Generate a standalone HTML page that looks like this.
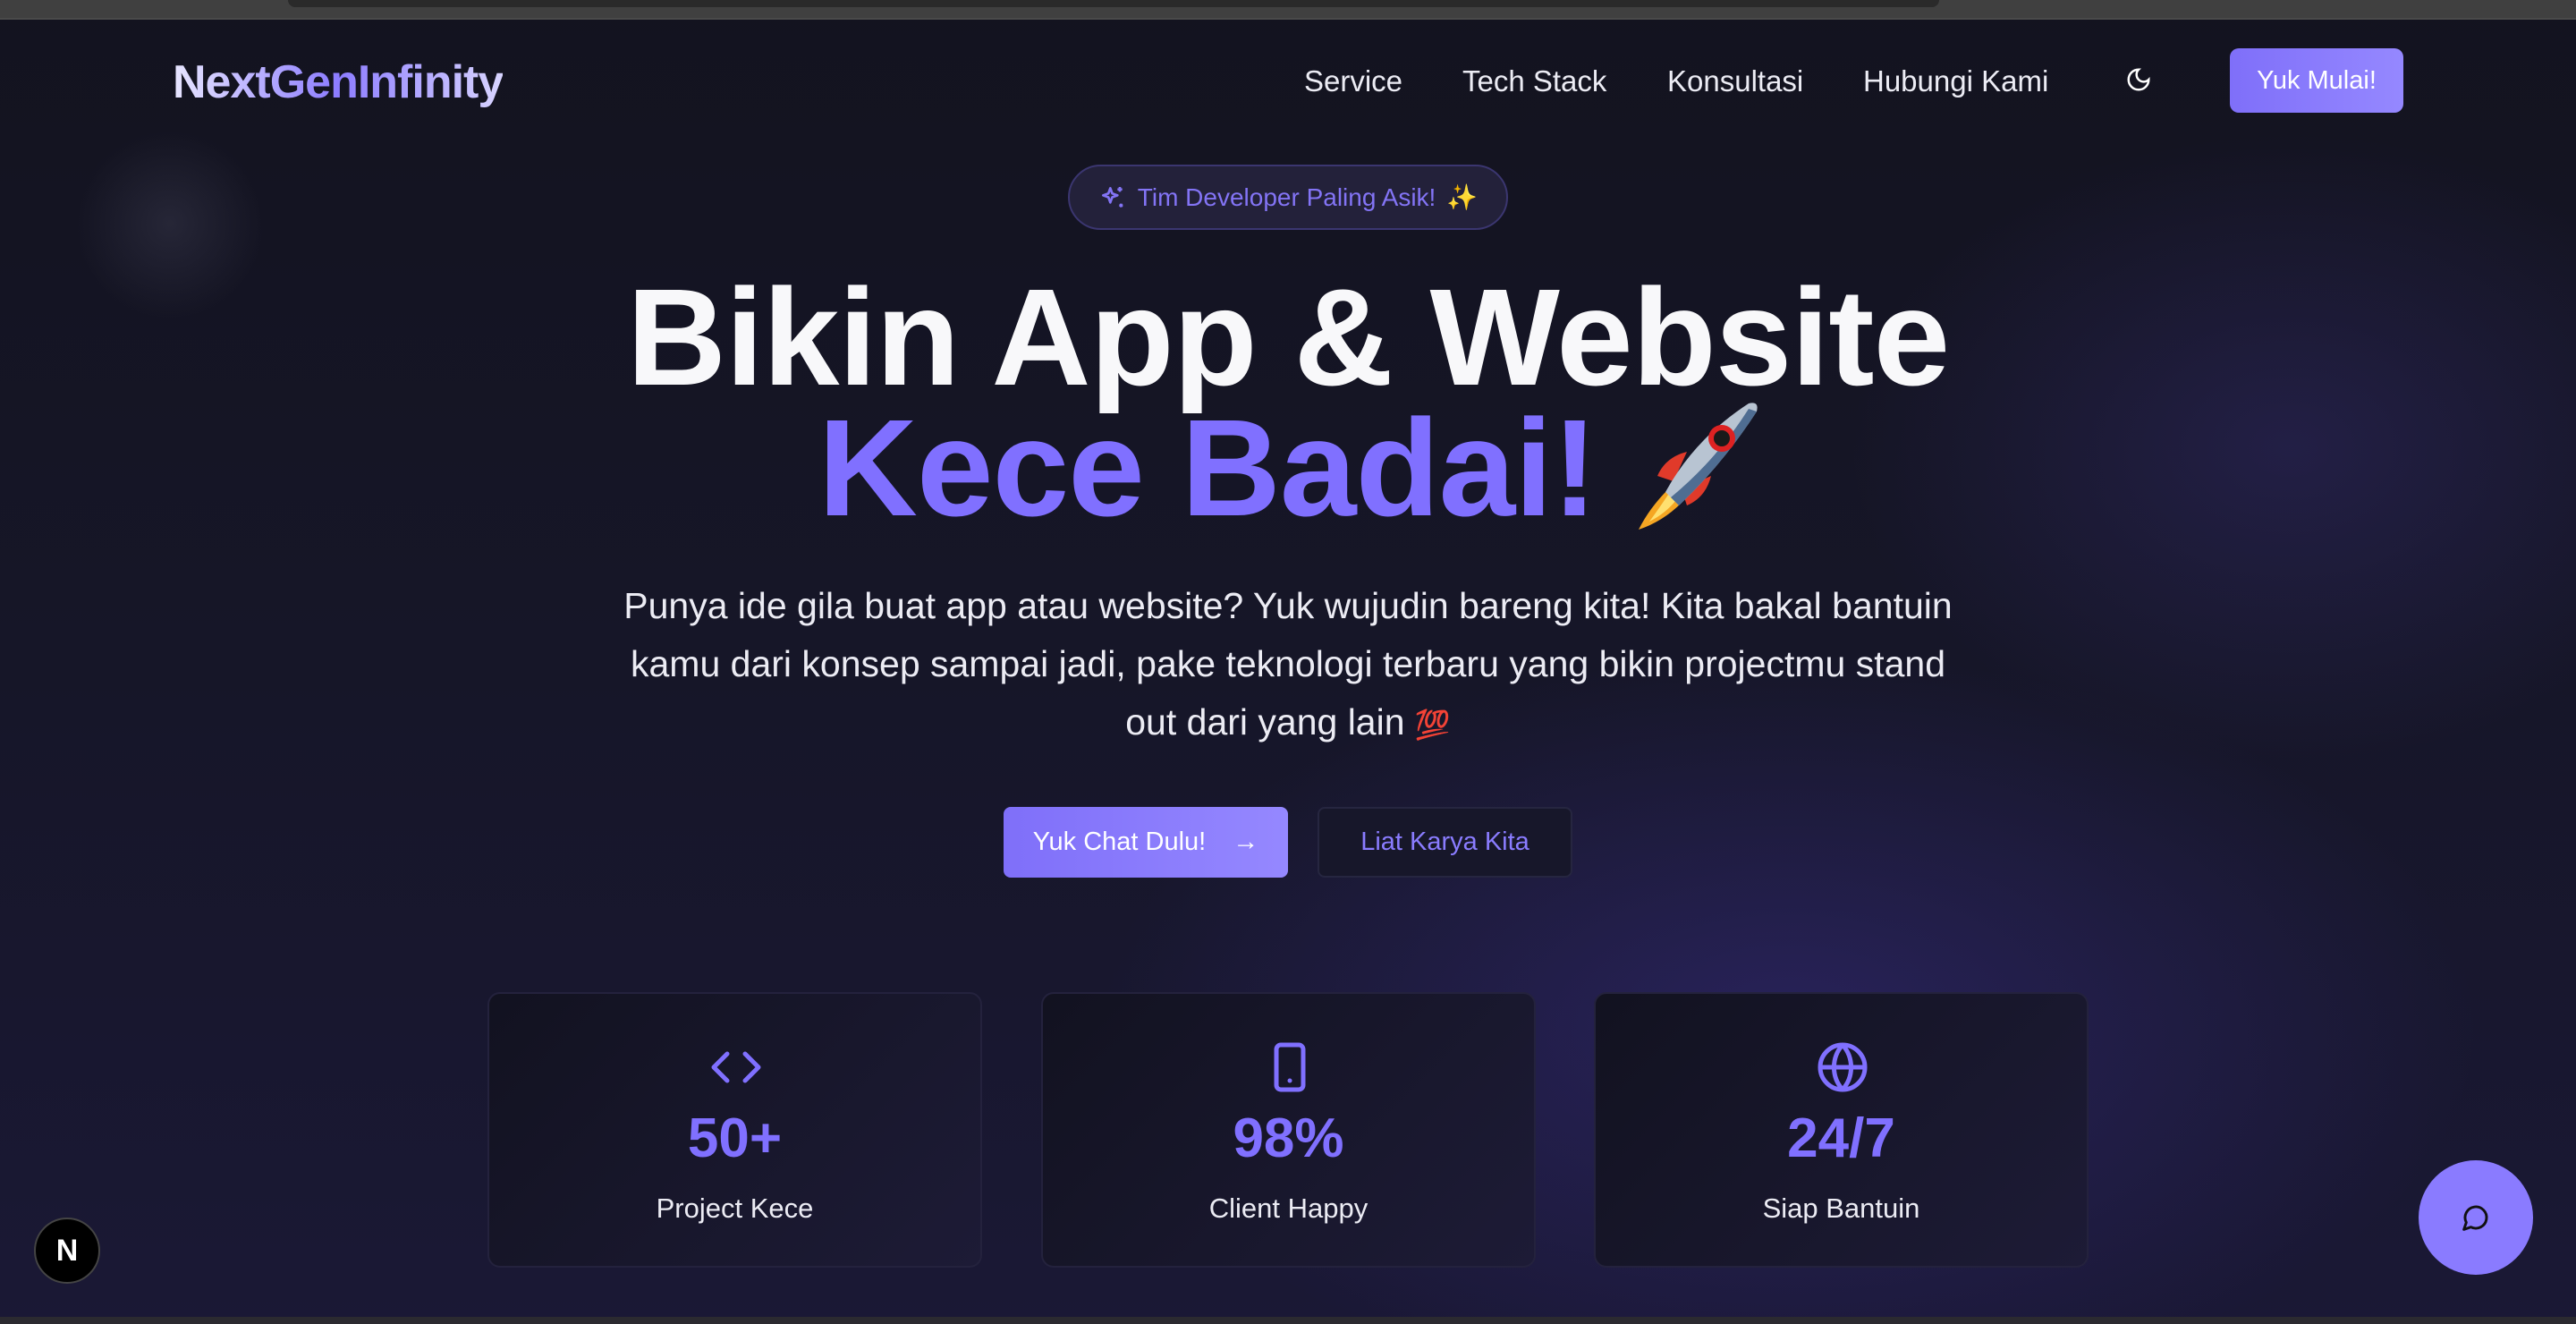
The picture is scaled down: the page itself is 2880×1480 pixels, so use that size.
<!DOCTYPE html>
<html><head><meta charset="utf-8">
<style>
*{margin:0;padding:0;box-sizing:border-box}
html,body{width:2880px;height:1480px;overflow:hidden;background:#121220;font-family:"Liberation Sans",sans-serif}
.top{position:absolute;left:0;top:0;width:2880px;height:22px;background:#404040;border-bottom:2px solid #4a4a4a;z-index:5}
.tab{position:absolute;left:322px;top:0;width:1846px;height:8px;background:#2a2a2a;border-radius:0 0 14px 14px}
.page{position:absolute;left:0;top:0;width:2880px;height:1480px;background:
radial-gradient(ellipse 700px 500px at 2560px 500px,rgba(60,50,130,.35),transparent 70%),
radial-gradient(ellipse 1100px 600px at 2000px 1150px,rgba(70,55,170,.35),transparent 70%),
radial-gradient(circle 150px at 190px 250px,rgba(60,60,80,.45),transparent 70%),
linear-gradient(180deg,#13131f 0%,#161628 50%,#1a1835 100%);}
.bottom{position:absolute;left:0;top:1472px;width:2880px;height:8px;background:#2b2a30;z-index:5}
.logo{position:absolute;left:193px;top:62px;font-size:52px;font-weight:bold;letter-spacing:-1px;background:linear-gradient(90deg,#e8e6ff 0%,#8c7cff 50%,#d8d4ff 100%);-webkit-background-clip:text;color:transparent}
.nav{position:absolute;top:72px;font-size:33px;color:#ececf4}
.btn1{position:absolute;left:2493px;top:54px;width:194px;height:72px;border-radius:10px;background:linear-gradient(90deg,#7f6ff9,#9588ff);color:#fff;font-size:29px;display:flex;align-items:center;justify-content:center}
.badge{position:absolute;left:1194px;top:184px;width:492px;height:73px;border-radius:37px;border:2px solid #3b3670;background:#23213a;color:#8374f5;font-size:28px;display:flex;align-items:center;justify-content:center;gap:12px}
.h1{position:absolute;left:0;width:2880px;text-align:center;font-weight:bold;font-size:154px;letter-spacing:-1px;line-height:1}
.p{position:absolute;left:500px;width:1880px;top:645px;text-align:center;font-size:41px;line-height:65px;color:#ececf4}
.b{position:absolute;top:902px;height:79px;border-radius:8px;display:flex;align-items:center;justify-content:center;font-size:29px}
.card{position:absolute;top:1109px;width:553px;height:308px;border-radius:14px;border:2px solid #24223d;background:linear-gradient(135deg,#121220,#1d1b36);text-align:center}
.card svg{position:absolute;left:246px;top:52px}
.num{position:absolute;top:126px;width:100%;font-size:62px;font-weight:bold;color:#8070ff}
.lab{position:absolute;top:222px;width:100%;font-size:31px;color:#ececf4}
</style></head><body>
<div class="top"><div class="tab"></div></div>
<div class="page">
<div class="logo">NextGenInfinity</div>
<div class="nav" style="left:1458px">Service</div>
<div class="nav" style="left:1635px">Tech Stack</div>
<div class="nav" style="left:1864px">Konsultasi</div>
<div class="nav" style="left:2083px">Hubungi Kami</div>
<svg style="position:absolute;left:2376px;top:74px" width="30" height="30" viewBox="0 0 24 24" fill="none" stroke="#fff" stroke-width="2" stroke-linecap="round"><path d="M12 3a6 6 0 0 0 9 9 9 9 0 1 1-9-9Z"/></svg>
<div class="btn1">Yuk Mulai!</div>
<div class="badge"><svg width="32" height="32" viewBox="0 0 24 24" fill="none" stroke="#8374f5" stroke-width="2" stroke-linejoin="round"><path d="M10 4l1.6 4.4L16 10l-4.4 1.6L10 16l-1.6-4.4L4 10l4.4-1.6Z"/><path d="M18 3v4M16 5h4M19 17v3M17.5 18.5h3"/></svg>Tim Developer Paling Asik! <span style="color:#f5d040">✨</span></div>
<div class="h1" style="top:300px;color:#f8f8fa">Bikin App &amp; Website</div>
<div class="h1" style="top:446px;color:#8070ff;padding-right:180px">Kece Badai!</div>
<svg style="position:absolute;left:1815px;top:445px" width="160" height="150" viewBox="0 0 100 100">
<path d="M22 58 Q28 44 44 40 L34 62Z" fill="#e03a2a"/><path d="M44 80 Q58 74 62 58 L40 68Z" fill="#e03a2a"/>
<path d="M30 68 Q16 82 8 98 Q26 92 40 78Z" fill="#f5a623"/><path d="M30 72 Q22 84 16 92 Q28 86 36 76Z" fill="#ffe070"/>
<path d="M28 70 Q50 30 90 4 Q98 2 96 10 Q70 50 38 80Z" fill="#b8c4d2"/>
<path d="M38 80 Q70 50 96 10 L90 8 Q66 46 32 74Z" fill="#4f6d92"/>
<circle cx="70" cy="30" r="10" fill="#d22"/><circle cx="70" cy="30" r="6" fill="#1a1a1a"/>
</svg>
<div class="p">Punya ide gila buat app atau website? Yuk wujudin bareng kita! Kita bakal bantuin<br>kamu dari konsep sampai jadi, pake teknologi terbaru yang bikin projectmu stand<br>out dari yang lain <span style="color:#e03030;font-weight:bold;font-size:32px">💯</span></div>
<div class="b" style="left:1122px;width:318px;background:linear-gradient(90deg,#7f6ff9,#9588ff);color:#fff;gap:30px">Yuk Chat Dulu! <span>→</span></div>
<div class="b" style="left:1473px;width:285px;background:#17172a;border:2px solid #262640;color:#8a7cff">Liat Karya Kita</div>
<div class="card" style="left:545px"><svg width="60" height="60" viewBox="0 0 24 24" fill="none" stroke="#8070ff" stroke-width="2" stroke-linecap="round" stroke-linejoin="round"><path d="M8 6l-6 6 6 6M16 6l6 6-6 6"/></svg><div class="num">50+</div><div class="lab">Project Kece</div></div>
<div class="card" style="left:1164px"><svg width="60" height="60" viewBox="0 0 24 24" fill="none" stroke="#8070ff" stroke-width="2" stroke-linecap="round"><rect x="6" y="2" width="12" height="20" rx="2"/><path d="M12 18h.01"/></svg><div class="num">98%</div><div class="lab">Client Happy</div></div>
<div class="card" style="left:1782px"><svg width="60" height="60" viewBox="0 0 24 24" fill="none" stroke="#8070ff" stroke-width="2"><circle cx="12" cy="12" r="10"/><path d="M2 12h20M12 2a15 15 0 0 1 0 20M12 2a15 15 0 0 0 0 20"/></svg><div class="num">24/7</div><div class="lab">Siap Bantuin</div></div>
<div style="position:absolute;left:2704px;top:1297px;width:128px;height:128px;border-radius:50%;background:#8a7bff;display:flex;align-items:center;justify-content:center"><svg width="32" height="32" viewBox="0 0 24 24" fill="none" stroke="#111" stroke-width="2.2" stroke-linejoin="round"><path d="M7.9 20A9 9 0 1 0 4 16.1L2 22Z"/></svg></div>
<div style="position:absolute;left:38px;top:1361px;width:74px;height:74px;border-radius:50%;background:#000;border:2px solid #444;color:#fff;font-size:34px;font-weight:bold;display:flex;align-items:center;justify-content:center">N</div>
</div>
<div class="bottom"></div>
</body></html>
